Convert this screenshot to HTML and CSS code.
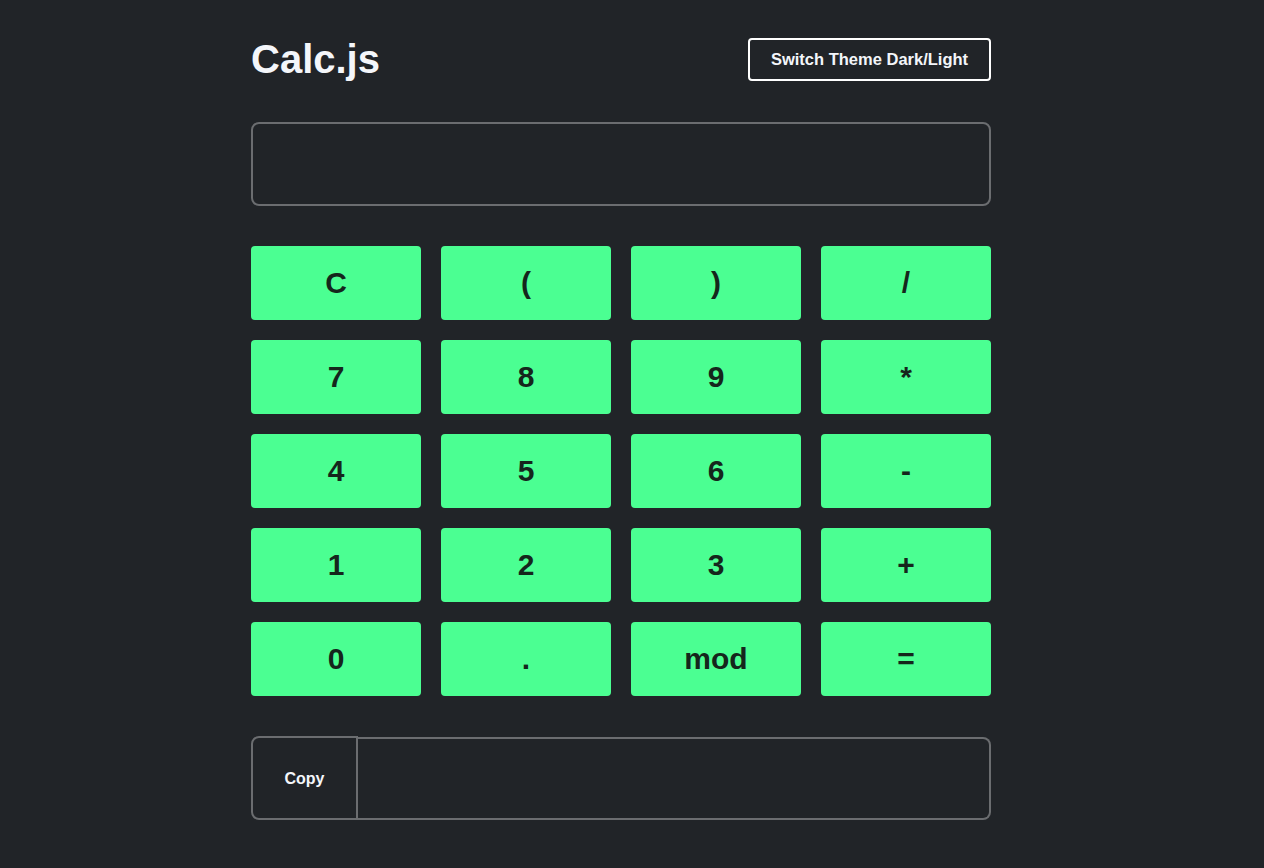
FILE: index.html
```html
<!DOCTYPE html>
<html lang="en">
<head>
<meta charset="utf-8">
<title>Calc.js</title>
<link rel="stylesheet" href="styles.css">
</head>
<body>
<main class="app">
  <header class="header">
    <h1 class="title">Calc.js</h1>
    <button class="theme-btn">Switch Theme Dark/Light</button>
  </header>
  <input class="display" type="text">
  <div class="keypad">
    <button class="key">C</button>
    <button class="key">(</button>
    <button class="key">)</button>
    <button class="key">/</button>
    <button class="key">7</button>
    <button class="key">8</button>
    <button class="key">9</button>
    <button class="key">*</button>
    <button class="key">4</button>
    <button class="key">5</button>
    <button class="key">6</button>
    <button class="key">-</button>
    <button class="key">1</button>
    <button class="key">2</button>
    <button class="key">3</button>
    <button class="key">+</button>
    <button class="key">0</button>
    <button class="key">.</button>
    <button class="key">mod</button>
    <button class="key">=</button>
  </div>
  <div class="result">
    <button class="copy-btn">Copy</button>
    <input class="result-input" type="text">
  </div>
</main>
</body>
</html>
```
FILE: styles.css
```css
* { box-sizing: border-box; }
html, body { margin: 0; background: #212428; }
body {
  font-family: "Liberation Sans", Arial, sans-serif;
  color: #f4f6fa;
  padding: 38px 22px 0 0;
  min-height: 868px;
}
.app {
  width: 740px;
  margin: 0 auto;
}
.header {
  display: flex;
  justify-content: space-between;
  align-items: center;
  height: 43px;
}
.title {
  margin: 0;
  font-size: 40px;
  font-weight: bold;
  color: #f4f6fa;
  line-height: 43px;
}
.theme-btn {
  height: 43px;
  width: 243px;
  background: transparent;
  border: 2px solid #ffffff;
  border-radius: 4px;
  color: #f4f6fa;
  font-family: inherit;
  font-size: 16.5px;
  font-weight: bold;
  padding: 0;
}
.display {
  display: block;
  width: 100%;
  height: 84px;
  margin-top: 41px;
  background: transparent;
  border: 2px solid #6b6d70;
  border-radius: 8px;
  outline: none;
}
.keypad {
  margin-top: 40px;
  display: grid;
  grid-template-columns: repeat(4, 1fr);
  grid-auto-rows: 74px;
  gap: 20px;
}
.key {
  background: #4bff92;
  border: none;
  border-radius: 4px;
  color: #15261c;
  font-family: inherit;
  font-size: 30px;
  font-weight: bold;
  padding: 0;
}
.result {
  margin-top: 41px;
  display: flex;
  align-items: flex-start;
}
.copy-btn {
  width: 107px;
  height: 84px;
  margin-top: -1px;
  background: transparent;
  border: 2px solid #6b6d70;
  border-radius: 8px 0 0 8px;
  color: #f4f6fa;
  font-family: inherit;
  font-size: 16px;
  font-weight: bold;
  padding: 2px 0 0;
}
.result-input {
  flex: 1;
  height: 83px;
  background: transparent;
  border: 2px solid #6b6d70;
  border-left: none;
  border-radius: 0 8px 8px 0;
  outline: none;
}
```
